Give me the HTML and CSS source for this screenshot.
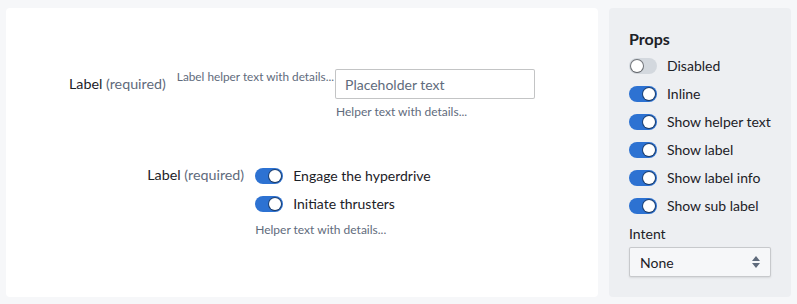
FILE: index.html
```html
<!DOCTYPE html>
<html>
<head>
<meta charset="utf-8">
<link rel="stylesheet" href="styles.css">
</head>
<body>
<div class="page">
  <div class="card">
    <div class="fg fg-one">
      <label class="fg-label">Label <span class="req">(required)</span></label>
      <div class="fg-sub">Label helper text with details...</div>
      <div class="fg-content">
        <input class="input" type="text" placeholder="Placeholder text">
        <div class="helper helper-input">Helper text with details...</div>
      </div>
    </div>
    <div class="fg fg-two">
      <label class="fg-label">Label <span class="req">(required)</span></label>
      <div class="fg-content switches">
        <div class="sw-row"><span class="sw on"><span class="knob"></span></span><span class="sw-text">Engage the hyperdrive</span></div>
        <div class="sw-row"><span class="sw on"><span class="knob"></span></span><span class="sw-text">Initiate thrusters</span></div>
        <div class="helper">Helper text with details...</div>
      </div>
    </div>
  </div>
  <div class="panel">
    <div class="panel-title">Props</div>
    <div class="sw-row"><span class="sw"><span class="knob"></span></span><span class="sw-text">Disabled</span></div>
    <div class="sw-row"><span class="sw on"><span class="knob"></span></span><span class="sw-text">Inline</span></div>
    <div class="sw-row"><span class="sw on"><span class="knob"></span></span><span class="sw-text">Show helper text</span></div>
    <div class="sw-row"><span class="sw on"><span class="knob"></span></span><span class="sw-text">Show label</span></div>
    <div class="sw-row"><span class="sw on"><span class="knob"></span></span><span class="sw-text">Show label info</span></div>
    <div class="sw-row"><span class="sw on"><span class="knob"></span></span><span class="sw-text">Show sub label</span></div>
    <div class="intent-label">Intent</div>
    <div class="select">
      <span>None</span>
      <svg class="caret" width="10" height="16" viewBox="0 0 10 16"><path d="M5 2 L9 7 L1 7 Z M1 9 L9 9 L5 14 Z" fill="#5f6b7c"/></svg>
    </div>
  </div>
</div>
</body>
</html>
```
FILE: styles.css
```css
* { box-sizing: border-box; }
html, body { margin: 0; padding: 0; }
body {
  background: #f6f7f9;
  font-family: "Lato", "Noto Sans", sans-serif;
  font-size: 14px;
  color: #1c2127;
  width: 797px;
  height: 304px;
  overflow: hidden;
}
.page {
  display: flex;
  gap: 11px;
  padding: 8px 6px 7px 6px;
  height: 304px;
}
.card {
  flex: 0 0 592px;
  background: #fff;
  border-radius: 4px;
  display: flex;
  flex-direction: column;
  align-items: center;
  padding-top: 61px;
}
.fg {
  display: flex;
  align-items: flex-start;
}
.fg-label {
  line-height: 30px;
  margin-right: 11px;
  font-size: 14.3px;
  color: #1c2127;
}
.req { color: #5f6b7c; }
.fg-sub {
  font-size: 11.8px;
  line-height: 14px;
  color: #5f6b7c;
  margin-top: 1px;
  margin-right: 1px;
}
.fg-content { display: flex; flex-direction: column; }
.input {
  width: 200px;
  height: 30px;
  border: none;
  border-radius: 2px;
  box-shadow: inset 0 0 0 1px rgba(17,20,24,.25);
  padding: 0 10px;
  font-family: inherit;
  font-size: 14px;
  color: #1c2127;
  background: #fff;
  outline: none;
}
.input::placeholder { color: #5f6b7c; opacity: 1; }
.helper {
  font-size: 12px;
  line-height: 14px;
  color: #5f6b7c;
}
.helper-input { margin-top: 6px; margin-left: 1px; }
.fg-two { margin-top: 41px; margin-left: -26px; }
.switches { padding-top: 7px; }
.sw-row {
  display: flex;
  align-items: center;
  height: 18px;
  margin-bottom: 10px;
}
.sw {
  position: relative;
  width: 28px;
  height: 16px;
  border-radius: 8px;
  background: #d3d8de;
  flex: 0 0 28px;
  margin-right: 10px;
}
.sw.on { background: #2d72d2; }
.knob {
  position: absolute;
  top: 2px;
  left: 2px;
  width: 12px;
  height: 12px;
  border-radius: 50%;
  background: #fff;
  box-shadow: 0 0 0 1px rgba(17,20,24,.5), 0 1px 1px rgba(17,20,24,.2);
}
.sw.on .knob { left: 14px; }
.sw-text { font-size: 14px; line-height: 18px; color: #1c2127; }
.panel {
  flex: 0 0 182px;
  background: #edeff2;
  border-radius: 4px;
  padding: 21px 20px 19px 20px;
  display: flex;
  flex-direction: column;
}
.panel-title {
  font-size: 16px;
  font-weight: 700;
  line-height: 20px;
  margin-bottom: 8px;
}
.intent-label {
  font-size: 14px;
  line-height: 18px;
  margin-top: 0;
}
.select {
  margin-top: 4px;
  height: 30px;
  width: 142px;
  background: #f6f7f9;
  border-radius: 2px;
  box-shadow: inset 0 0 0 1px rgba(17,20,24,.2), 0 1px 2px rgba(17,20,24,.1);
  display: flex;
  align-items: center;
  justify-content: space-between;
  padding: 0 10px 0 11px;
  font-size: 14px;
}
.caret { display: block; }
```
